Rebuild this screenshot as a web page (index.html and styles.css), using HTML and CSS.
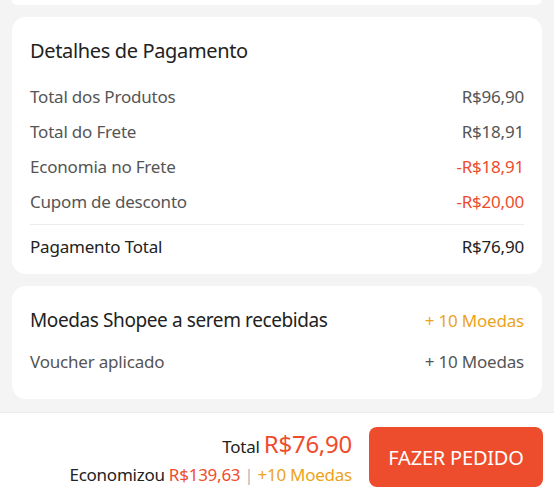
FILE: index.html
```html
<!DOCTYPE html>
<html lang="pt-BR">
<head>
<meta charset="utf-8">
<title>Detalhes de Pagamento</title>
<link rel="stylesheet" href="styles.css">
</head>
<body>
<div class="page">
  <div class="card card-stub"></div>

  <section class="card">
    <h2 class="card-title">Detalhes de Pagamento</h2>
    <div class="rows">
      <div class="row"><span>Total dos Produtos</span><span>R$96,90</span></div>
      <div class="row"><span>Total do Frete</span><span>R$18,91</span></div>
      <div class="row"><span>Economia no Frete</span><span class="red">-R$18,91</span></div>
      <div class="row"><span>Cupom de desconto</span><span class="red">-R$20,00</span></div>
    </div>
    <div class="divider"></div>
    <div class="row row-total"><span>Pagamento Total</span><span>R$76,90</span></div>
  </section>

  <section class="card card-coins">
    <div class="title-row">
      <h2 class="card-title coins-title">Moedas Shopee a serem recebidas</h2>
      <span class="orange coins-val">+ 10 Moedas</span>
    </div>
    <div class="row row-voucher"><span>Voucher aplicado</span><span>+ 10 Moedas</span></div>
  </section>
</div>

<footer class="bar">
  <div class="summary">
    <div class="sum-total"><span class="lbl">Total</span> <span class="big red">R$76,90</span></div>
    <div class="sum-save"><span class="lbl">Economizou</span> <span class="red">R$139,63</span><span class="sep">|</span><span class="orange">+10 Moedas</span></div>
  </div>
  <button class="order-btn">FAZER PEDIDO</button>
</footer>
</body>
</html>
```

FILE: styles.css
```css
* { box-sizing: border-box; }
html, body { margin: 0; padding: 0; }
body {
  background: #f4f4f4;
  font-family: "Noto Sans", "Open Sans", sans-serif;
  color: #222;
  width: 554px;
  height: 500px;
  overflow: hidden;
}
.page {
  padding: 0 12px;
  height: 412px;
}
.card {
  background: #fff;
  border-radius: 14px;
  padding: 20px 18px 10px 18px;
  margin-top: 12px;
}
.card-stub {
  height: 5px;
  margin-top: 0;
  padding: 0;
  border-radius: 0 0 8px 8px;
}
.card-title {
  margin: 0;
  font-size: 20px;
  font-weight: 400;
  line-height: 28px;
  letter-spacing: -0.35px;
  color: #222;
}
.coins-title {
  font-size: 19px;
  letter-spacing: -0.4px;
}
.rows { margin-top: 14px; }
.row {
  display: flex;
  justify-content: space-between;
  align-items: center;
  height: 35px;
  font-size: 17px;
  letter-spacing: -0.2px;
  color: #555;
}
.divider {
  border-top: 1px solid #ececec;
  margin: 5px 0 4px;
}
.row-total { color: #222; }
.red { color: #ee4d2d; }
.orange { color: #eda31c; }
.card-coins {
  padding-bottom: 20px;
}
.title-row {
  display: flex;
  justify-content: space-between;
  align-items: center;
}
.coins-val { font-size: 17px; letter-spacing: -0.2px; }
.row-voucher { margin-top: 10px; }
.bar {
  background: #fff;
  border-top: 1px solid #ececec;
  height: 88px;
  display: flex;
  justify-content: flex-end;
  align-items: flex-start;
  padding: 14px 11px 0 0;
  gap: 17px;
}
.summary {
  text-align: right;
  padding-top: 2px;
  letter-spacing: -0.25px;
}
.sum-total {
  font-size: 17px;
  line-height: 30px;
  color: #222;
}
.big { font-size: 24px; }
.sum-save {
  font-size: 17px;
  line-height: 26px;
  color: #222;
}
.sep {
  color: #b5b5b5;
  margin: 0 4px;
}
.order-btn {
  width: 174px;
  height: 60px;
  border: none;
  border-radius: 8px;
  background: #ee4d2d;
  color: #fff;
  font-family: inherit;
  font-size: 20px;
  letter-spacing: -0.2px;
  padding: 0;
}
```
